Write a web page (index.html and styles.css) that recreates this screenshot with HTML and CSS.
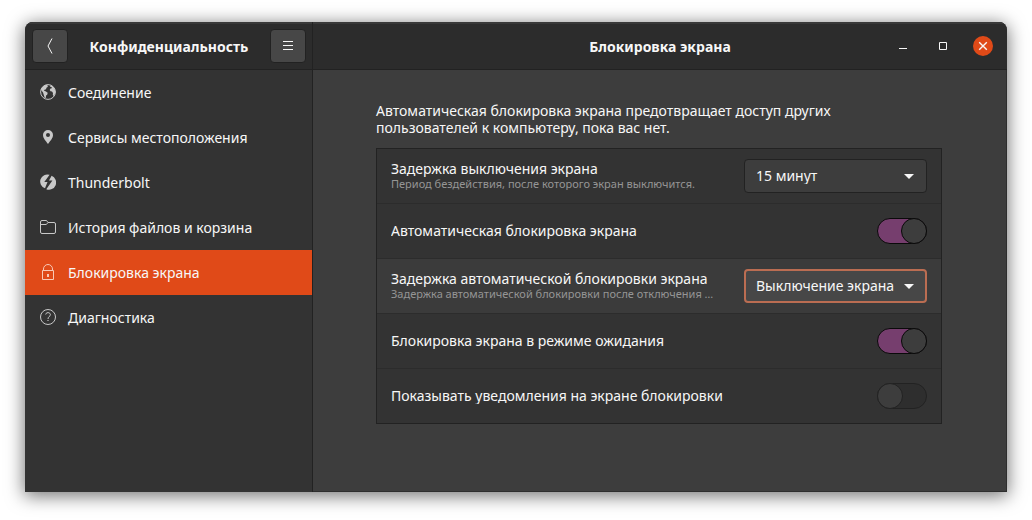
FILE: index.html
```html
<!DOCTYPE html>
<html lang="ru">
<head>
<meta charset="utf-8">
<meta name="viewport" content="width=device-width, initial-scale=1">
<title>Блокировка экрана</title>
<link rel="stylesheet" href="styles.css">
</head>
<body>
<div class="window">
  <header class="side-header">
    <button class="header-button" type="button" aria-label="Назад">
      <svg width="16" height="16" viewBox="0 0 16 16" fill="none" stroke="currentColor"><path d="M10 0.5 6 8l4 7.500"/></svg>
    </button>
    <h2 class="title">Конфиденциальность</h2>
    <button class="header-button" type="button" aria-label="Меню">
      <svg width="16" height="16" viewBox="0 0 16 16" fill="none" stroke="currentColor"><path d="M3 3.500h10M3 7.500h10M3 11.500h10"/></svg>
    </button>
  </header>
  <header class="main-header">
    <h1 class="title">Блокировка экрана</h1>
    <div class="window-controls">
      <button class="control" type="button" aria-label="Свернуть">
        <svg width="20" height="20" viewBox="0 0 20 20" fill="none" stroke="currentColor"><path d="M6 12.500h8"/></svg>
      </button>
      <button class="control" type="button" aria-label="Развернуть">
        <svg width="20" height="20" viewBox="0 0 20 20" fill="none" stroke="currentColor"><path d="M6.500 6.500h7v7h-7z"/></svg>
      </button>
      <button class="control control-close" type="button" aria-label="Закрыть">
        <svg width="20" height="20" viewBox="0 0 20 20" fill="none" stroke="currentColor" stroke-width="1.400"><path d="m6.200 6.200 7.600 7.600M13.800 6.200l-7.600 7.600"/></svg>
      </button>
    </div>
  </header>
  <nav class="sidebar">
    <a class="nav-item" href="#connectivity">
      <svg class="nav-icon" viewBox="0 0 16 16"><circle cx="8" cy="8" r="7.400" fill="none" stroke="currentColor"/><path fill="currentColor" d="M1 5.500C2 2.500 4.500.8 7.600.7L7.400 2l.6.8-1.600 1-.3 1.400-1.600.6-.5 1 1.500.4 2.200 1.500-.4 1.800-1.200 1-.3 2.200-1 .5-1-3.200L3 8.500 1.500 6.500zM10.200 1.200c3 .7 4.900 3.300 5.200 6.500-.1 1.600-.7 3-1.600 4.200l-1-.8.2-2-1-1.500-1.500-.3-.8-1.300.8-1.500 1.300-.3-.2-1.100-1.300-.2z"/></svg>
      <span>Соединение</span>
    </a>
    <a class="nav-item" href="#location">
      <svg class="nav-icon" viewBox="0 0 16 16"><path fill="currentColor" fill-rule="evenodd" d="M8 1a5 5 0 0 1 5 5c0 3.500-3 6-5 9-2-3-5-5.500-5-9a5 5 0 0 1 5-5zm0 3a2 2 0 1 0 0 4 2 2 0 0 0 0-4z"/></svg>
      <span>Сервисы местоположения</span>
    </a>
    <a class="nav-item" href="#thunderbolt">
      <svg class="nav-icon" viewBox="0 0 16 16"><path fill="currentColor" d="M9.600.8 4.300 7.900h3.200L5 14.300A7 7 0 0 1 9.600.8zM11.600 1.800A7 7 0 0 1 6.300 15.200L12.400 6.600H9z"/></svg>
      <span>Thunderbolt</span>
    </a>
    <a class="nav-item" href="#history">
      <svg class="nav-icon" viewBox="0 0 16 16" fill="none" stroke="currentColor"><path d="M2 1.500h4.500l1.500 2h6A1.500 1.500 0 0 1 15.500 5v8a1.500 1.500 0 0 1-1.500 1.500H2A1.500 1.500 0 0 1 .5 13V3A1.500 1.500 0 0 1 2 1.500zM.5 5.500h5.800L8 3.500"/></svg>
      <span>История файлов и корзина</span>
    </a>
    <a class="nav-item nav-item-active" href="#lock" aria-current="page">
      <svg class="nav-icon" viewBox="0 0 16 16" fill="none" stroke="currentColor"><path d="M2.500 6.500h11v9h-11zM3.500 6.500V5a4.500 4.500 0 0 1 9 0v1.500"/><path d="M8 10v3" stroke-width="2"/></svg>
      <span>Блокировка экрана</span>
    </a>
    <a class="nav-item" href="#diagnostics">
      <svg class="nav-icon" viewBox="0 0 16 16" fill="none" stroke="currentColor"><circle cx="8" cy="8" r="7.500"/><path d="M5.700 5.500C5.800 3 10.400 3 10.400 5.700 10.400 7.500 8 7.500 8 10"/><path d="M7.400 11.500h1.200"/></svg>
      <span>Диагностика</span>
    </a>
  </nav>
  <main class="content">
    <p class="intro">Автоматическая блокировка экрана предотвращает доступ других пользователей к компьютеру, пока вас нет.</p>
    <div class="panel">
      <div class="row">
        <label class="row-text" for="blank-delay">
          <span class="row-title">Задержка выключения экрана</span>
          <small class="row-note">Период бездействия, после которого экран выключится.</small>
        </label>
        <div class="dropdown">
          <select id="blank-delay" class="select"><option>15 минут</option></select>
          <svg class="arrow" viewBox="0 0 10 5"><path fill="currentColor" d="M0 0h10L5 5z"/></svg>
        </div>
      </div>
      <div class="row">
        <label class="row-text" for="auto-lock"><span class="row-title">Автоматическая блокировка экрана</span></label>
        <input id="auto-lock" class="switch" type="checkbox" role="switch" checked>
      </div>
      <div class="row row-hover">
        <label class="row-text" for="lock-delay">
          <span class="row-title">Задержка автоматической блокировки экрана</span>
          <small class="row-note">Задержка автоматической блокировки после отключения …</small>
        </label>
        <div class="dropdown">
          <select id="lock-delay" class="select select-focus"><option>Выключение экрана</option></select>
          <svg class="arrow" viewBox="0 0 10 5"><path fill="currentColor" d="M0 0h10L5 5z"/></svg>
        </div>
      </div>
      <div class="row">
        <label class="row-text" for="suspend-lock"><span class="row-title">Блокировка экрана в режиме ожидания</span></label>
        <input id="suspend-lock" class="switch" type="checkbox" role="switch" checked>
      </div>
      <div class="row">
        <label class="row-text" for="notifications"><span class="row-title">Показывать уведомления на экране блокировки</span></label>
        <input id="notifications" class="switch" type="checkbox" role="switch">
      </div>
    </div>
  </main>
</div>
</body>
</html>
```
FILE: styles.css
```css
*,
*::before {
  box-sizing: border-box;
}

body {
  margin: 0;
  min-height: 100vh;
  padding: 22px 25px 28px;
  display: flex;
  background: #fff;
  color: #f7f7f7;
  font: 14px/17px "Noto Sans", "Open Sans", sans-serif;
}

button,
select {
  font: inherit;
  color: inherit;
}

.window {
  flex: 1;
  min-width: 0;
  display: grid;
  grid-template-columns: 288px minmax(0, 1fr);
  grid-template-rows: 48px 1fr;
  border-radius: 8px 8px 0 0;
  overflow: hidden;
  background: #3d3d3d;
  box-shadow: 0 3px 18px 1px rgba(0, 0, 0, 0.55);
}

.side-header,
.main-header {
  display: flex;
  align-items: center;
  background: #2c2c2c;
  border-bottom: 1px solid #222;
  box-shadow: inset 0 2px #393939;
}

.side-header {
  justify-content: space-between;
  padding: 1px 6px 0 7px;
  border-right: 1px solid #222;
}

.main-header {
  display: grid;
  grid-template-columns: 1fr auto 1fr;
  padding: 1px 14px 0;
}

.main-header .title {
  grid-column: 2;
}

.title {
  margin: 0;
  font-size: 14px;
  font-weight: 700;
  line-height: 17px;
}

.header-button {
  width: 36px;
  height: 34px;
  padding: 0;
  display: grid;
  place-items: center;
  border: 1px solid #222;
  border-radius: 4px;
  background: #474747;
}

.window-controls {
  display: flex;
  gap: 20px;
  justify-self: end;
}

.control {
  width: 20px;
  height: 20px;
  padding: 0;
  border: 0;
  border-radius: 50%;
  background: none;
}

.control svg {
  display: block;
}

.control-close {
  background: #e04a18;
}

.sidebar {
  background: #333;
  border-right: 1px solid #222;
}

.nav-item {
  height: 45px;
  padding: 0 15px;
  display: flex;
  align-items: center;
  gap: 12px;
  color: inherit;
  text-decoration: none;
}

.nav-item-active {
  background: #e04a18;
}

.nav-icon {
  width: 16px;
  height: 16px;
  flex: none;
  margin-bottom: 2px;
  color: #c8c8c8;
}

.nav-item-active .nav-icon {
  color: #f8c8b5;
}

.content {
  padding: 32px 64px 32px 63px;
  border: solid #2e2e2e;
  border-width: 0 1px 1px 0;
}

.intro {
  max-width: 500px;
  margin: 0 0 12px;
}

.panel {
  border: 1px solid #222;
  background: #333;
}

.row {
  height: 55px;
  padding: 0 14px;
  display: flex;
  align-items: center;
  gap: 12px;
  border-bottom: 1px solid #2c2c2c;
}

.row:last-child {
  height: 54px;
  border-bottom: 0;
}

.row-hover {
  background: #3b3b3b;
}

.row-text {
  flex: 1;
  min-width: 0;
  padding-bottom: 2px;
  display: flex;
  flex-direction: column;
}

.row-title,
.row-note {
  overflow: hidden;
  white-space: nowrap;
  text-overflow: ellipsis;
}

.row-note {
  font-size: 11px;
  line-height: 13px;
  color: #959595;
}

.dropdown {
  flex: none;
  width: 183px;
  display: grid;
  align-items: center;
}

.select,
.arrow {
  grid-area: 1 / 1;
}

.select {
  appearance: none;
  width: 100%;
  height: 34px;
  padding: 0 26px 2px 11px;
  border: 1px solid #222;
  border-radius: 4px;
  background: #3d3d3d;
}

.select-focus {
  padding: 0 25px 2px 10px;
  border: 2px solid #bb6d52;
  background: #474747;
  outline: 0;
}

.arrow {
  width: 10px;
  height: 5px;
  margin-right: 13px;
  justify-self: end;
  pointer-events: none;
}

.switch {
  appearance: none;
  flex: none;
  width: 50px;
  height: 26px;
  margin: 0;
  display: flex;
  border: 1px solid #222;
  border-radius: 13px;
  background: #2e2e2e;
}

.switch::before {
  content: "";
  width: 26px;
  height: 26px;
  margin: -1px;
  border: 1px solid #222;
  border-radius: 50%;
  background: #3d3d3d;
}

.switch:checked {
  justify-content: flex-end;
  border-color: #0a0a0a;
  background: #763e6e;
}

.switch:checked::before {
  border-color: #0a0a0a;
}
```
